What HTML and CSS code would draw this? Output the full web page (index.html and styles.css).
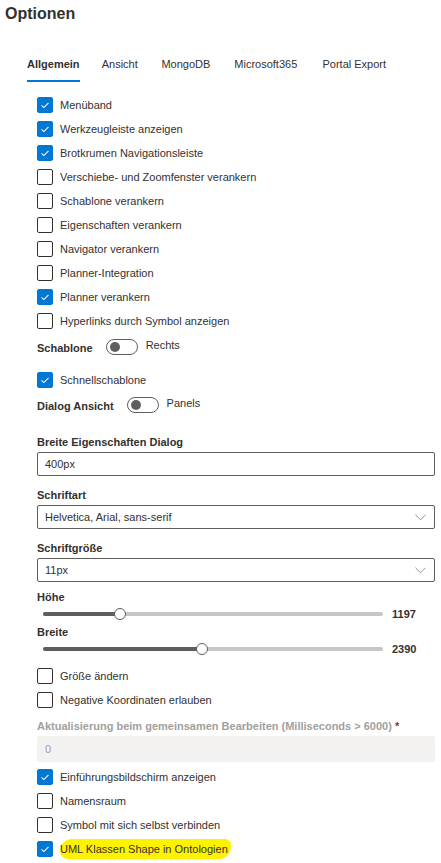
FILE: index.html
```html
<!DOCTYPE html>
<html lang="de">
<head>
<meta charset="utf-8">
<title>Optionen</title>
<link rel="stylesheet" href="styles.css">
</head>
<body>
<div class="page">
  <h1 class="title">Optionen</h1>
  <nav class="tabs">
    <span class="tab active" data-text="Allgemein">Allgemein</span>
    <span class="tab" data-text="Ansicht">Ansicht</span>
    <span class="tab" data-text="MongoDB">MongoDB</span>
    <span class="tab" data-text="Microsoft365">Microsoft365</span>
    <span class="tab" data-text="Portal Export">Portal Export</span>
  </nav>

  <div class="content">
    <div class="checklist first">
      <div class="check"><span class="box on"><svg viewBox="0 0 16 16"><polyline points="4,8.3 6.7,11 12,5.6"/></svg></span><span>Menüband</span></div>
      <div class="check"><span class="box on"><svg viewBox="0 0 16 16"><polyline points="4,8.3 6.7,11 12,5.6"/></svg></span><span>Werkzeugleiste anzeigen</span></div>
      <div class="check"><span class="box on"><svg viewBox="0 0 16 16"><polyline points="4,8.3 6.7,11 12,5.6"/></svg></span><span>Brotkrumen Navigationsleiste</span></div>
      <div class="check"><span class="box"></span><span>Verschiebe- und Zoomfenster verankern</span></div>
      <div class="check"><span class="box"></span><span>Schablone verankern</span></div>
      <div class="check"><span class="box"></span><span>Eigenschaften verankern</span></div>
      <div class="check"><span class="box"></span><span>Navigator verankern</span></div>
      <div class="check"><span class="box"></span><span>Planner-Integration</span></div>
      <div class="check"><span class="box on"><svg viewBox="0 0 16 16"><polyline points="4,8.3 6.7,11 12,5.6"/></svg></span><span>Planner verankern</span></div>
      <div class="check"><span class="box"></span><span>Hyperlinks durch Symbol anzeigen</span></div>
    </div>

    <div class="toggle-row">
      <span class="toggle-label">Schablone</span>
      <span class="toggle"><span class="knob"></span></span>
      <span class="toggle-state">Rechts</span>
    </div>

    <div class="checklist single">
      <div class="check"><span class="box on"><svg viewBox="0 0 16 16"><polyline points="4,8.3 6.7,11 12,5.6"/></svg></span><span>Schnellschablone</span></div>
    </div>

    <div class="toggle-row second">
      <span class="toggle-label">Dialog Ansicht</span>
      <span class="toggle"><span class="knob"></span></span>
      <span class="toggle-state">Panels</span>
    </div>

    <div class="field f1">
      <div class="label">Breite Eigenschaften Dialog</div>
      <div class="input">400px</div>
    </div>

    <div class="field">
      <div class="label">Schriftart</div>
      <div class="input select"><span>Helvetica, Arial, sans-serif</span><svg class="chev" viewBox="0 0 12 7"><polyline points="0.5,0.5 6,6 11.5,0.5"/></svg></div>
    </div>

    <div class="field">
      <div class="label">Schriftgröße</div>
      <div class="input select"><span>11px</span><svg class="chev" viewBox="0 0 12 7"><polyline points="0.5,0.5 6,6 11.5,0.5"/></svg></div>
    </div>

    <div class="sliders">
      <div class="label slabel">Höhe</div>
      <div class="slider-row tall">
        <div class="track"><div class="rail"></div><div class="fill" style="width:22.5%"></div><div class="thumb" style="left:22.5%"></div></div>
        <span class="value">1197</span>
      </div>
      <div class="label slabel">Breite</div>
      <div class="slider-row">
        <div class="track"><div class="rail"></div><div class="fill" style="width:46.9%"></div><div class="thumb" style="left:46.9%"></div></div>
        <span class="value">2390</span>
      </div>
    </div>

    <div class="checklist mid">
      <div class="check"><span class="box"></span><span>Größe ändern</span></div>
      <div class="check"><span class="box"></span><span>Negative Koordinaten erlauben</span></div>
    </div>

    <div class="field disabled">
      <div class="label">Aktualisierung beim gemeinsamen Bearbeiten (Milliseconds &gt; 6000)<span class="req"> *</span></div>
      <div class="input dis">0</div>
    </div>

    <div class="checklist last">
      <div class="check"><span class="box on"><svg viewBox="0 0 16 16"><polyline points="4,8.3 6.7,11 12,5.6"/></svg></span><span>Einführungsbildschirm anzeigen</span></div>
      <div class="check"><span class="box"></span><span>Namensraum</span></div>
      <div class="check"><span class="box"></span><span>Symbol mit sich selbst verbinden</span></div>
      <div class="check"><span class="box on"><svg viewBox="0 0 16 16"><polyline points="4,8.3 6.7,11 12,5.6"/></svg></span><span class="hl">UML Klassen Shape in Ontologien</span></div>
    </div>
  </div>
</div>
</body>
</html>
```

FILE: styles.css
```css
* { box-sizing: border-box; }

html, body {
  margin: 0;
  padding: 0;
  background: #ffffff;
}

body {
  font-family: "Liberation Sans", Arial, sans-serif;
  font-size: 11px;
  color: #323130;
}

.page {
  width: 441px;
}

.title {
  margin: 0;
  padding-left: 5px;
  height: 28px;
  line-height: 28px;
  font-size: 16px;
  font-weight: 700;
  color: #323130;
}

.tabs {
  display: flex;
  gap: 20px;
  margin-top: 18px;
  padding-left: 27px;
}

.tab {
  display: inline-flex;
  flex-direction: column;
  align-items: center;
  padding-top: 8px;
  padding-bottom: 6px;
  line-height: 20px;
  border-bottom: 2px solid transparent;
  color: #323130;
}

.tab::after {
  content: attr(data-text);
  font-weight: 700;
  height: 0;
  overflow: hidden;
  visibility: hidden;
}

.tab.active {
  font-weight: 700;
  border-bottom-color: #0078d4;
}

.content {
  padding-left: 37px;
  padding-right: 6px;
}

.checklist {
  display: flex;
  flex-direction: column;
}

.checklist.first { margin-top: 11px; }
.checklist.single { margin-top: 7px; }
.checklist.mid { margin-top: 7px; }
.checklist.last { margin-top: 3px; }

.check {
  display: flex;
  align-items: center;
  height: 24px;
  gap: 7px;
}

.box {
  width: 16px;
  height: 16px;
  flex: 0 0 16px;
  border: 1px solid #323130;
  border-radius: 2px;
  background: #fff;
  display: flex;
  align-items: center;
  justify-content: center;
}

.box.on {
  background: #0078d4;
  border-color: #0078d4;
}

.box svg {
  width: 16px;
  height: 16px;
  fill: none;
  stroke: #ffffff;
  stroke-width: 1.2;
}

.toggle-row {
  display: flex;
  align-items: center;
  height: 28px;
}

.toggle-row.second { margin-top: -1px; }

.toggle-label {
  font-weight: 700;
  margin-right: 13px;
  margin-top: 2px;
}

.toggle {
  width: 32px;
  height: 16px;
  border: 1px solid #605e5c;
  border-radius: 8px;
  display: flex;
  align-items: center;
  padding-left: 3px;
}

.knob {
  width: 10px;
  height: 10px;
  border-radius: 50%;
  background: #605e5c;
}

.toggle-state {
  margin-left: 8px;
  margin-bottom: 5px;
}

.field { margin-top: 10px; }
.field.f1 { margin-top: 14px; }

.label {
  font-weight: 700;
  line-height: 18px;
  margin-bottom: 1px;
}

.input {
  height: 24px;
  border: 1px solid #605e5c;
  border-radius: 2px;
  padding-left: 7px;
  display: flex;
  align-items: center;
}

.select {
  justify-content: space-between;
  padding-right: 8px;
}

.chev {
  width: 11px;
  height: 7px;
  fill: none;
  stroke: #8a8886;
  stroke-width: 1;
}

.sliders { margin-top: 7px; }

.slabel {
  line-height: 16px;
  margin-bottom: 0;
}

.slider-row {
  display: flex;
  align-items: center;
  height: 16px;
}

.slider-row.tall { height: 18px; }

.sliders .slabel + .slider-row + .slabel { line-height: 18px; }

.track {
  position: relative;
  width: 340px;
  height: 12px;
  margin-left: 6px;
}

.rail, .fill {
  position: absolute;
  top: 4px;
  left: 0;
  height: 4px;
  border-radius: 2px;
}

.rail {
  width: 100%;
  background: #c8c6c4;
}

.fill {
  background: #605e5c;
}

.thumb {
  position: absolute;
  top: 0;
  width: 12px;
  height: 12px;
  margin-left: -6px;
  border-radius: 50%;
  background: #ffffff;
  border: 1px solid #605e5c;
}

.value {
  margin-left: 9px;
  font-weight: 700;
}

.field.disabled { margin-top: 5px; }

.field.disabled .label { color: #a19f9d; }

.req { color: #a4262c; }

.input.dis {
  height: 26px;
  border: none;
  background: #f3f2f1;
  color: #a19f9d;
  padding-left: 8px;
}

.hl {
  background: #fff200;
  border-radius: 12px 6px 12px 8px;
  padding: 4px 3px 4px 0;
}
```
